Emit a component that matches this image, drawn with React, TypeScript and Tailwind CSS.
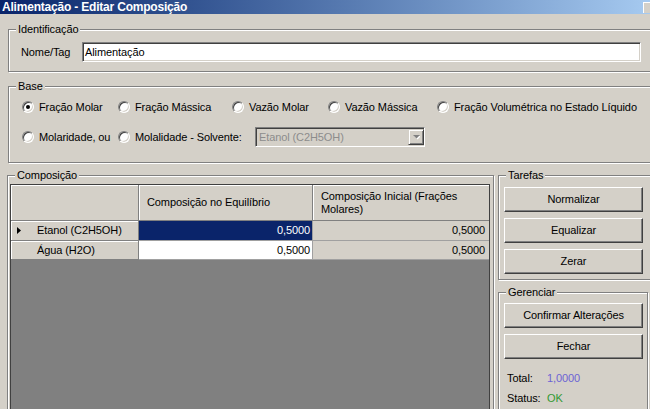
import type { ReactNode } from "react"

function GroupBox({ label, className, children }: { label: string; className?: string; children?: ReactNode }) {
  return (
    <div
      className={`relative shrink-0 border border-[#808080] shadow-[inset_1px_1px_0_#ffffff,1px_1px_0_#ffffff] ${className ?? ""}`}
    >
      <span className="absolute -top-[7px] left-[7px] bg-[#d4d0c8] px-[2px] leading-[13px]">{label}</span>
      {children}
    </div>
  )
}

function Radio({ checked }: { checked?: boolean }) {
  return (
    <span className="flex h-[12px] w-[12px] shrink-0 items-center justify-center rounded-full border border-t-[#808080] border-l-[#808080] border-r-white border-b-white bg-white shadow-[inset_1px_1px_0_#404040,inset_-1px_-1px_0_#d4d0c8]">
      {checked && <span className="h-[4px] w-[4px] rounded-full bg-black" />}
    </span>
  )
}

function Option({ label, checked, width }: { label: string; checked?: boolean; width: string }) {
  return (
    <div className={`flex shrink-0 items-center ${width}`}>
      <Radio checked={checked} />
      <span className="ml-[5px] whitespace-nowrap">{label}</span>
    </div>
  )
}

function Btn({ children }: { children: ReactNode }) {
  return (
    <div className="flex h-[25px] w-[139px] items-center justify-center border border-t-white border-l-white border-r-[#404040] border-b-[#404040] bg-[#d4d0c8] shadow-[inset_-1px_-1px_0_#808080]">
      {children}
    </div>
  )
}

const sunken =
  "border border-t-[#808080] border-l-[#808080] border-r-white border-b-white shadow-[inset_1px_1px_0_#404040,inset_-1px_-1px_0_#d4d0c8]"

const rows = [
  { name: "Etanol (C2H5OH)", eq: "0,5000", init: "0,5000", current: true },
  { name: "Água (H2O)", eq: "0,5000", init: "0,5000", current: false },
]

export default function App() {
  return (
    <div className="h-[409px] w-[650px] overflow-hidden bg-[#d4d0c8] font-['Liberation_Sans',Arial,sans-serif] text-[11px] leading-[13px] tracking-[-0.1px] text-black">
      {/* title bar */}
      <div className="flex h-[14px] bg-linear-to-r from-[#0a246a] to-[#a6caf0]">
        <span className="pl-[2px] text-[12px] font-bold leading-[14px] tracking-[-0.2px] text-white">
          Alimentação - Editar Composição
        </span>
        <div className="ml-auto mt-[2px] h-[11px] w-[7px] border-l border-t border-white bg-[#d4d0c8]" />
      </div>

      <GroupBox label="Identificação" className="ml-[8px] mt-[15px] h-[43px] w-[660px]">
        <div className="flex items-center pl-[12px] pt-[12px]">
          <span className="w-[61px]">Nome/Tag</span>
          <div className={`flex h-[20px] w-[559px] items-center bg-white pl-[2px] ${sunken}`}>Alimentação</div>
        </div>
      </GroupBox>

      <GroupBox label="Base" className="ml-[8px] mt-[14px] h-[77px] w-[660px]">
        <div className="flex flex-col pl-[13px] pt-[13px]">
          <div className="flex h-[14px] items-center">
            <Option label="Fração Molar" checked width="w-[96px]" />
            <Option label="Fração Mássica" width="w-[114px]" />
            <Option label="Vazão Molar" width="w-[96px]" />
            <Option label="Vazão Mássica" width="w-[109px]" />
            <Option label="Fração Volumétrica no Estado Líquido" width="w-[210px]" />
          </div>
          <div className="mt-[13px] flex h-[20px] items-center">
            <Option label="Molaridade, ou" width="w-[96px]" />
            <Option label="Molalidade - Solvente:" width="w-[137px]" />
            <div className={`flex h-[20px] w-[170px] items-center bg-[#d4d0c8] ${sunken}`}>
              <span className="flex-1 pl-[3px] text-[#8c8c8c]">Etanol (C2H5OH)</span>
              <div className="flex h-[16px] w-[16px] items-center justify-center border border-t-[#d4d0c8] border-l-[#d4d0c8] border-r-[#404040] border-b-[#404040] shadow-[inset_1px_1px_0_#ffffff,inset_-1px_-1px_0_#808080]">
                <svg width="7" height="5" viewBox="0 0 7 5">
                  <polygon points="1,1 8,1 4.5,4.5" fill="#ffffff" />
                  <polygon points="0,0 7,0 3.5,3.5" fill="#808080" />
                </svg>
              </div>
            </div>
          </div>
        </div>
      </GroupBox>

      <div className="mt-[12px] flex items-start">
        <GroupBox label="Composição" className="ml-[7px] h-[250px] w-[487px]">
          <div className="ml-[2px] mt-[8px] h-[240px] w-[480px] border border-[#404040] bg-[#808080]">
            <div className="flex h-[36px]">
              <div className="w-[128px] border-b border-r border-[#808080] bg-[#d4d0c8] shadow-[inset_1px_1px_0_#ffffff]" />
              <div className="flex w-[174px] items-center border-b border-r border-[#808080] bg-[#d4d0c8] pl-[8px] shadow-[inset_1px_1px_0_#ffffff]">
                Composição no Equilíbrio
              </div>
              <div className="flex w-[176px] items-center border-b border-[#808080] bg-[#d4d0c8] pl-[8px] pr-[20px] shadow-[inset_1px_1px_0_#ffffff]">
                Composição Inicial (Frações Molares)
              </div>
            </div>
            {rows.map((r, i) => (
              <div key={r.name} className={`flex ${i === 0 ? "h-[20px]" : "h-[19px]"}`}>
                <div className="flex w-[128px] items-center border-b border-r border-[#808080] bg-[#d4d0c8] pl-[6px] shadow-[inset_1px_1px_0_#ffffff]">
                  <svg width="4" height="7" viewBox="0 0 4 7" className={r.current ? "" : "invisible"}>
                    <polygon points="0,0 4,3.5 0,7" fill="#000000" />
                  </svg>
                  <span className="ml-[16px]">{r.name}</span>
                </div>
                <div
                  className={`flex w-[174px] items-center justify-end border-b border-r border-[#a0a0a0] pr-[2px] ${
                    r.current ? "bg-[#0a246a] text-white" : "bg-white"
                  }`}
                >
                  {r.eq}
                </div>
                <div className="flex w-[176px] items-center justify-end border-b border-[#a0a0a0] bg-[#d4d0c8] pr-[4px]">
                  {r.init}
                </div>
              </div>
            ))}
          </div>
        </GroupBox>

        <div className="ml-[4px] flex flex-col">
          <GroupBox label="Tarefas" className="h-[105px] w-[160px]">
            <div className="flex flex-col gap-[6px] pl-[5px] pt-[11px]">
              <Btn>Normalizar</Btn>
              <Btn>Equalizar</Btn>
              <Btn>Zerar</Btn>
            </div>
          </GroupBox>
          <GroupBox label="Gerenciar" className="mt-[12px] h-[130px] w-[150px]">
            <div className="flex flex-col pl-[5px] pt-[10px]">
              <div className="flex flex-col gap-[6px]">
                <Btn>Confirmar Alterações</Btn>
                <Btn>Fechar</Btn>
              </div>
              <div className="ml-[3px] mt-[13px] flex">
                <span className="w-[40px]">Total:</span>
                <span className="text-[#6c63d4]">1,0000</span>
              </div>
              <div className="ml-[3px] mt-[7px] flex">
                <span className="w-[40px]">Status:</span>
                <span className="text-[#339933]">OK</span>
              </div>
            </div>
          </GroupBox>
        </div>
      </div>
    </div>
  )
}
